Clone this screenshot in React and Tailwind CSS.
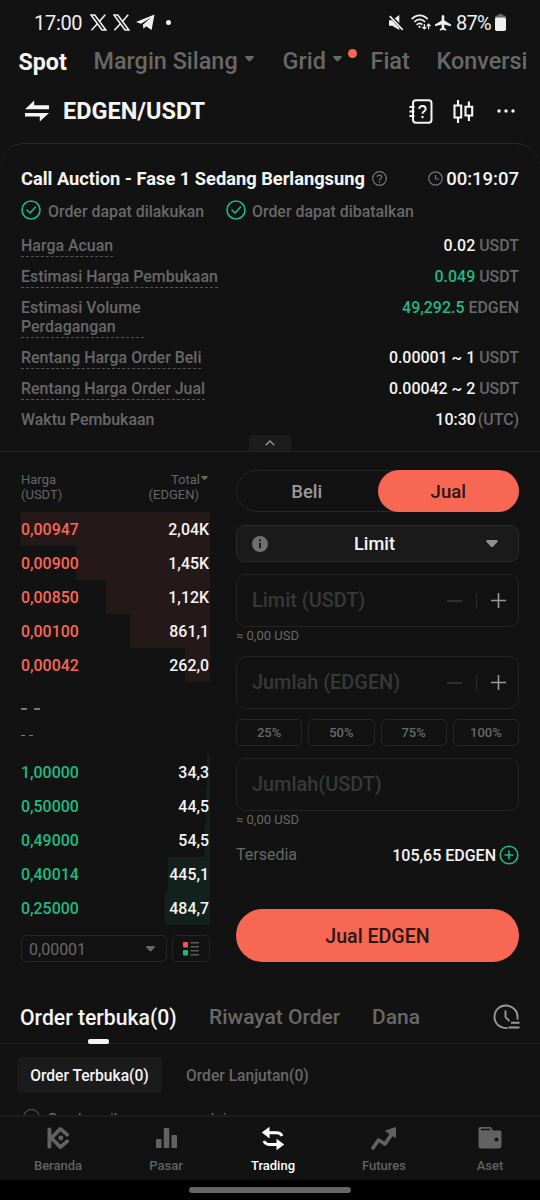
import { useState } from "react";

const auctionRows = [
  { label: "Harga Acuan", value: "0.02", unit: "USDT" },
  { label: "Estimasi Harga Pembukaan", value: "0.049", unit: "USDT", green: true },
  { label: "Estimasi Volume Perdagangan", value: "49,292.5", unit: "EDGEN", green: true, wrap: true },
  { label: "Rentang Harga Order Beli", value: "0.00001 ~ 1", unit: "USDT" },
  { label: "Rentang Harga Order Jual", value: "0.00042 ~ 2", unit: "USDT" },
];

const asks = [
  { price: "0,00947", total: "2,04K", depth: 189 },
  { price: "0,00900", total: "1,45K", depth: 134 },
  { price: "0,00850", total: "1,12K", depth: 104 },
  { price: "0,00100", total: "861,1", depth: 80 },
  { price: "0,00042", total: "262,0", depth: 25 },
];

const bids = [
  { price: "1,00000", total: "34,3", depth: 3 },
  { price: "0,50000", total: "44,5", depth: 4 },
  { price: "0,49000", total: "54,5", depth: 5 },
  { price: "0,40014", total: "445,1", depth: 42 },
  { price: "0,25000", total: "484,7", depth: 45 },
];

const XLogo = () => (
  <svg width="17" height="17" viewBox="0 0 17 17" fill="none" stroke="#f0f0f0">
    <path d="M1 1h3.8l11 15H12z" strokeWidth="1.6" />
    <path d="M15.2 .8 9.6 7.2M7.4 9.8 1.4 16.3" strokeWidth="1.6" />
  </svg>
);

const Caret = ({ className, size = 10 }) => (
  <svg className={className} width={size} height={size * 0.6} viewBox="0 0 10 6" fill="currentColor">
    <path d="M1.2 0h7.6c1 0 1.4.9.8 1.6L6 5.5c-.6.6-1.4.6-2 0L.4 1.6C-.2.9.2 0 1.2 0z" />
  </svg>
);

const CheckCircle = () => (
  <svg width="20" height="20" viewBox="0 0 20 20" fill="none" stroke="#1fba83" strokeWidth="1.6">
    <circle cx="10" cy="10" r="9" />
    <path d="m6 10 3 3 5.3-5.8" strokeLinecap="round" strokeLinejoin="round" />
  </svg>
);

function StatusBar() {
  return (
    <div className="flex h-[45px] items-center pl-[34px] pr-[34px] text-[20px] text-[#f0f0f0]">
      <span className="w-[48px] whitespace-nowrap tracking-[-0.3px]">17:00</span>
      <div className="ml-[8px] flex items-center gap-[6px]">
        <XLogo />
        <XLogo />
        <svg width="19" height="17" viewBox="0 0 19 17" fill="#f0f0f0">
          <path d="M18.5.4 15.6 16 10 12.2l-2.5 2.5-.7-4L15 3.5 5 9.7 0 8z" />
        </svg>
      </div>
      <span className="ml-[11px] size-[5px] rounded-full bg-[#f0f0f0]" />
      <div className="ml-auto flex items-center">
        <svg width="15" height="16" viewBox="0 0 16 17" fill="#f0f0f0">
          <path d="M0 5.5h3.5L11 0v16L3.5 11.5H0z" />
          <path d="M.5 0 15 15.5" stroke="#121212" strokeWidth="3.6" />
          <path d="M.8 1.2 14.6 15.8" stroke="#f0f0f0" strokeWidth="1.8" />
        </svg>
        <svg className="ml-[7px]" width="20" height="17" viewBox="0 0 21 17" fill="none" stroke="#f0f0f0" strokeWidth="1.8">
          <path d="M.7 5C5.5-.3 12.7-.3 17.500 5M3.500 8c3.200-3.600 8-3.600 11.200 0M6 11c1.800-1.900 4-1.900 5.800-.3" />
          <circle cx="9" cy="13" r="1.2" fill="#f0f0f0" stroke="none" />
          <path d="M14 10v5m-2-1.800 2 2 2-2M18.500 15.500v-5m-2 1.800 2-2 2 2" strokeWidth="1.3" />
        </svg>
        <svg className="ml-[4px]" width="16" height="16" viewBox="0 0 17 17" fill="#f0f0f0">
          <path d="M8.5 0c.9 0 1.4.8 1.4 1.7v4.200L17 10v2l-7.100-2v3.800l2 1.400v1.500l-3.400-1-3.400 1v-1.500l2-1.400V10L0 12v-2l7.100-4.100V1.700C7.100.8 7.600 0 8.500 0z" />
        </svg>
        <span className="ml-[5px] w-[37px] whitespace-nowrap tracking-[-0.8px]">87%</span>
        <svg className="ml-[2px]" width="11" height="17" viewBox="0 0 11 17">
          <rect x="3" y="0" width="5" height="3" rx="1" fill="#666" />
          <rect x="0" y="1.5" width="11" height="5" rx="1.5" fill="#666" />
          <rect x="0" y="3.5" width="11" height="13.5" rx="1.8" fill="#f0f0f0" />
        </svg>
      </div>
    </div>
  );
}

function MarketTabs() {
  return (
    <div className="flex h-[32px] items-center overflow-hidden whitespace-nowrap pt-[2px] text-[23.4px] font-medium text-[#686868]">
      <span className="ml-[18.500px] w-[75px] text-[23.2px] font-bold text-[#f5f5f5]">Spot</span>
      <span className="w-[151px]">Margin Silang</span>
      <Caret className="mb-[6px] mr-[29px]" size={9} />
      <span className="w-[50px]">Grid</span>
      <Caret className="mb-[6px]" size={9} />
      <span className="mb-[17px] ml-[6px] size-[9px] rounded-full bg-[#f86754]" />
      <span className="ml-[14px] w-[66px]">Fiat</span>
      <span>Konversi</span>
    </div>
  );
}

function PairHeader() {
  return (
    <div className="flex h-[66px] items-center pl-[24px] pr-[25px] pt-[2px]">
      <svg width="26" height="22" viewBox="0 0 26 22" fill="#f5f5f5">
        <path d="M1 9.3 10.2.5v4.800H25v4H1zM25 12.900 15.800 21.500v-5H1v-3.600h24z" />
      </svg>
      <span className="ml-[13px] whitespace-nowrap pt-[2px] text-[23.5px] font-bold text-[#f5f5f5]">EDGEN/USDT</span>
      <div className="ml-auto flex items-center text-[#f5f5f5]">
        <svg width="24" height="25" viewBox="0 0 24 25" fill="none" stroke="currentColor" strokeWidth="2">
          <rect x="4" y="1.2" width="18.5" height="22.5" rx="3" />
          <path d="M.5 8h5M.5 12.5h5M.5 17h5" />
          <path d="M10.200 10c0-4 6.500-3.900 6.500 0 0 2.300-3.200 2.300-3.200 4.800" strokeWidth="1.9" />
          <circle cx="13.5" cy="18" r="1.2" fill="currentColor" stroke="none" />
        </svg>
        <svg className="ml-[20px]" width="21" height="23" viewBox="0 0 21 23" fill="none" stroke="currentColor" strokeWidth="2.1">
          <path d="M1.500 5.500h6.700v12H1.500zM12.500 6.800h6.700v8.700h-6.700zM5 0v5.500M5 17.500V23M15.900 1.600v5M15.900 15.500v5.500" />
        </svg>
        <svg className="ml-[23px]" width="18" height="4" viewBox="0 0 18 4" fill="currentColor">
          <circle cx="2" cy="2" r="1.7" />
          <circle cx="9" cy="2" r="1.7" />
          <circle cx="16" cy="2" r="1.7" />
        </svg>
      </div>
    </div>
  );
}

function AuctionCard() {
  return (
    <div className="flex h-[308px] flex-col rounded-t-[24px] border-t border-[#2a2a2a] px-[21px] pt-[22px]">
      <div className="flex h-[24px] items-center">
        <span className="whitespace-nowrap pt-px text-[18.25px] font-bold text-[#f5f5f5]">
          Call Auction - Fase 1 Sedang Berlangsung
        </span>
        <svg className="ml-[7px]" width="15" height="15" viewBox="0 0 15 15" fill="none" stroke="#777">
          <circle cx="7.5" cy="7.5" r="6.8" strokeWidth="1.2" />
          <path d="M5.300 6.100c0-2.800 4.400-2.700 4.400-.1 0 1.500-2.200 1.600-2.200 3.200" strokeWidth="1.2" />
          <circle cx="7.5" cy="11" r=".8" fill="#777" stroke="none" />
        </svg>
        <svg className="ml-auto" width="15" height="15" viewBox="0 0 15 15" fill="none" stroke="#777" strokeWidth="1.2">
          <circle cx="7.5" cy="7.5" r="6.7" />
          <path d="M7.500 3.800v4.200h3.600" />
        </svg>
        <span className="ml-[3px] pt-[3px] text-[18.5px] font-medium text-[#f5f5f5]">00:19:07</span>
      </div>

      <div className="mt-[10px] flex h-[20px] items-center whitespace-nowrap text-[15.9px] text-[#686868]">
        <CheckCircle />
        <span className="ml-[7px] w-[178px] pt-[3px] font-medium">Order dapat dilakukan</span>
        <CheckCircle />
        <span className="ml-[6px] pt-[3px] font-medium">Order dapat dibatalkan</span>
      </div>

      <div className="mt-[16px] flex flex-col gap-[10px] text-[15.95px] font-medium leading-[19px] text-[#686868]">
        {auctionRows.map((row) => (
          <div key={row.label} className="flex items-start justify-between">
            <span
              className={
                row.wrap
                  ? "w-[123px] border-b border-dashed border-[#555] pb-px"
                  : "border-b border-dashed border-[#555] pb-px"
              }
            >
              {row.label}
            </span>
            <span>
              <span className={row.green ? "text-[#1fba83]" : "text-[#f5f5f5]"}>{row.value}</span> {row.unit}
            </span>
          </div>
        ))}
        <div className="flex justify-between">
          <span>Waktu Pembukaan</span>
          <span>
            <span className="mr-[2px] text-[#f5f5f5]">10:30</span>(UTC)
          </span>
        </div>
      </div>

      <div className="mx-auto mt-auto flex h-[16px] w-[42px] shrink-0 items-center justify-center rounded-t-[4px] bg-[#1c1c1c]">
        <svg width="10" height="6" viewBox="0 0 10 6" fill="none" stroke="#999" strokeWidth="1.3">
          <path d="m.7 5.200 4.300-4.200 4.300 4.200" />
        </svg>
      </div>
    </div>
  );
}

function BookRow({ row, side }) {
  return (
    <div className="relative flex h-[34px] items-center justify-between pr-px pt-[2px] text-[15.9px] font-medium">
      <div
        className={side === "ask" ? "absolute inset-y-0 right-0 bg-[#251818]" : "absolute inset-y-0 right-0 bg-[#12211c]"}
        style={{ width: row.depth }}
      />
      <span className={side === "ask" ? "relative text-[#f86754]" : "relative text-[#1fba83]"}>{row.price}</span>
      <span className="relative text-[#f5f5f5]">{row.total}</span>
    </div>
  );
}

function OrderBook() {
  return (
    <div className="w-[189px] pt-[20px]">
      <div className="flex h-[40px] justify-between text-[13px] leading-[15px] text-[#656565]">
        <span>
          Harga
          <br />
          (USDT)
        </span>
        <div className="text-right">
          <div className="flex items-center justify-end pr-[2px]">
            Total
            <Caret className="mb-[3px] ml-[1px]" size={7} />
          </div>
          <div className="pr-[11px]">(EDGEN)</div>
        </div>
      </div>
      {asks.map((row) => (
        <BookRow key={row.price} row={row} side="ask" />
      ))}
      <div className="flex h-[73px] flex-col gap-[25px] pt-[26px]">
        <div className="flex gap-[7px]">
          <span className="h-[2px] w-[6px] bg-[#777]" />
          <span className="h-[2px] w-[6px] bg-[#777]" />
        </div>
        <div className="flex gap-[4px]">
          <span className="h-px w-[4px] bg-[#777]" />
          <span className="h-px w-[4px] bg-[#777]" />
        </div>
      </div>
      {bids.map((row) => (
        <BookRow key={row.price} row={row} side="bid" />
      ))}
      <div className="mt-[10px] flex h-[27px] gap-[5px]">
        <div className="flex w-[146px] items-center justify-between rounded-[5px] border border-[#272727] pl-[7px] pr-[11px] pt-[2px] text-[16px] text-[#686868]">
          0,00001
          <Caret className="mb-px" size={9} />
        </div>
        <div className="flex flex-1 items-center justify-center rounded-[5px] border border-[#272727]">
          <svg width="16" height="14" viewBox="0 0 16 14">
            <rect width="5" height="5.5" rx="1" fill="#f65454" />
            <rect y="8" width="5" height="5.5" rx="1" fill="#1fba83" />
            <path d="M7.500 .8H16M7.500 4.800H16M7.500 8.800H16M7.500 12.800H16" stroke="#5a5a5a" strokeWidth="1.4" />
          </svg>
        </div>
      </div>
    </div>
  );
}

function AmountInput({ placeholder, stepper }) {
  return (
    <div className="flex h-[53px] items-center justify-between rounded-[10px] border border-[#242424] pl-[15px] pr-[12px] text-[19.9px] font-medium text-[#383838]">
      {placeholder}
      {stepper && (
        <div className="flex items-center gap-[14px]">
          <span className="h-[2px] w-[15px] bg-[#303030]" />
          <span className="h-[16px] w-px bg-[#2b2b2b]" />
          <svg width="15" height="15" viewBox="0 0 15 15" stroke="#999" strokeWidth="1.6">
            <path d="M0 7.500h15M7.500 0v15" />
          </svg>
        </div>
      )}
    </div>
  );
}

function OrderForm() {
  const [side, setSide] = useState("sell");
  const active = "flex-1 rounded-full bg-[#f86754] pt-[3px] text-[#2b1613]";
  const inactive = "flex-1 pt-[3px]";

  return (
    <div className="w-[283px] pt-[18px]">
      <div className="flex h-[42px] rounded-full text-[18.5px] font-medium text-[#999] ring-1 ring-inset ring-[#262626]">
        <button className={side === "buy" ? active : inactive} onClick={() => setSide("buy")}>
          Beli
        </button>
        <button className={side === "sell" ? active : inactive} onClick={() => setSide("sell")}>
          Jual
        </button>
      </div>

      <div className="mt-[13px] flex h-[37px] items-center rounded-[9px] border border-[#2b2b2b] bg-[#1a1a1a] pl-[15px] pr-[20px]">
        <svg width="16" height="16" viewBox="0 0 16 16">
          <circle cx="8" cy="8" r="8" fill="#707070" />
          <path d="M8 3.200v2M8 6.800v5.500" stroke="#1a1a1a" strokeWidth="1.9" />
        </svg>
        <span className="flex-1 pr-[5px] pt-px text-center text-[18.2px] font-medium text-[#f5f5f5]">Limit</span>
        <Caret className="text-[#8f8f8f]" size={12} />
      </div>

      <div className="mt-[12px]">
        <AmountInput placeholder="Limit (USDT)" stepper />
      </div>
      <div className="h-[29px] text-[13px] leading-[17px] text-[#686868]">≈ 0,00 USD</div>
      <AmountInput placeholder="Jumlah (EDGEN)" stepper />
      <div className="mt-[10px] grid h-[27px] grid-cols-4 gap-[6px] text-[13px] font-medium text-[#686868]">
        {["25%", "50%", "75%", "100%"].map((pct) => (
          <button key={pct} className="rounded-[5px] border border-[#272727]">
            {pct}
          </button>
        ))}
      </div>
      <div className="mt-[12px]">
        <AmountInput placeholder="Jumlah(USDT)" />
      </div>
      <div className="h-[33px] text-[13px] leading-[17px] text-[#686868]">≈ 0,00 USD</div>

      <div className="flex h-[22px] items-center justify-between text-[16px] text-[#686868]">
        Tersedia
        <div className="flex items-center gap-[3px] font-medium text-[#f5f5f5]">
          <span className="pt-[2px]">105,65 EDGEN</span>
          <svg width="20" height="20" viewBox="0 0 20 20" fill="none" stroke="#1fba83" strokeWidth="1.6">
            <circle cx="10" cy="10" r="8.8" />
            <path d="M5.500 10h9M10 5.500v9" />
          </svg>
        </div>
      </div>
      <button className="mt-[43px] h-[53px] w-full rounded-full bg-[#f86754] pt-[3px] text-[19.6px] font-medium text-[#2b1613]">
        Jual EDGEN
      </button>
    </div>
  );
}

function OrdersSection() {
  return (
    <div className="flex h-[123px] flex-col overflow-hidden whitespace-nowrap">
      <div className="flex h-[52px] shrink-0 items-center border-b border-[#202020] pl-[20px] pr-[20px] text-[21px] font-medium text-[#686868]">
        <div className="relative flex h-full w-[189px] items-center text-[21.2px] text-[#f5f5f5]">
          Order terbuka(0)
          <span className="absolute -bottom-px left-[68px] h-[5px] w-[21px] rounded-[2px] bg-[#f5f5f5]" />
        </div>
        <span className="w-[163px]">Riwayat Order</span>
        <span>Dana</span>
        <svg className="mb-[2px] ml-auto" width="27" height="26" viewBox="0 0 27 26" fill="none" stroke="#999" strokeWidth="1.9">
          <path d="M14.500 24C8 25 1.500 20 1.500 13S6.500 1.500 13 1.500 24.500 7 24.500 12.500v3M12.500 6.500v6.700l4 4M18 18.800h8.500M15.500 23.500h11" />
        </svg>
      </div>
      <div className="ml-[17px] mt-[13px] flex h-[36px] shrink-0 items-center text-[15.6px] font-medium">
        <span className="flex h-full w-[145px] items-center justify-center rounded-[5px] bg-[#1b1b1b] pt-[3px] text-[#f5f5f5]">
          Order Terbuka(0)
        </span>
        <span className="ml-[24px] pt-[3px] text-[#686868]">Order Lanjutan(0)</span>
      </div>
      <div className="ml-[23px] mt-[16px] flex shrink-0 items-start text-[15px] leading-[18px] text-[#777]">
        <span className="size-[17px] rounded-full border border-[#666]" />
        <span className="ml-[8px] pt-px">Sembunyikan pasangan lainnya</span>
      </div>
    </div>
  );
}

function NavItem({ label, width, active, children }) {
  return (
    <div
      className={active ? "flex flex-col items-center text-white" : "flex flex-col items-center text-[#626262]"}
      style={{ width }}
    >
      <div className="flex h-[26px] items-center">{children}</div>
      <span className="mt-[6px] text-[13px] font-medium leading-[18px]">{label}</span>
    </div>
  );
}

function BottomNav() {
  return (
    <div className="flex h-[65px] border-t-2 border-[#1c1c1c] pl-[4px] pt-[8px]">
      <NavItem label="Beranda" width={108}>
        <svg width="23" height="24" viewBox="0 0 24 24" fill="none" stroke="currentColor" strokeWidth="4" strokeLinecap="round" strokeLinejoin="round">
          <path d="M2.500 3v18M4.500 12 14 2.500l7 6M4.500 12l9.500 9.500 7-6" />
          <circle cx="14.500" cy="12" r="2.6" fill="currentColor" stroke="none" />
        </svg>
      </NavItem>
      <NavItem label="Pasar" width={108}>
        <svg width="21" height="20" viewBox="0 0 21 20" fill="currentColor">
          <rect x="0" y="11" width="5.5" height="9" rx=".8" />
          <rect x="7.8" y="0" width="5.5" height="20" rx=".8" />
          <rect x="15.5" y="7" width="5.5" height="13" rx=".8" />
        </svg>
      </NavItem>
      <NavItem label="Trading" width={106} active>
        <svg width="24" height="25" viewBox="0 0 24 25" fill="none" stroke="currentColor" strokeWidth="3">
          <path d="M7 6.800h8.500c3 0 4.500 1 5.500 3.200M17 18.500H9c-3.200 0-5-1-6-3.500" />
          <path d="M8.500.8v11.600L.8 6.600zM15.500 12.800v11.400l7.700-5.700z" fill="currentColor" stroke="none" />
        </svg>
      </NavItem>
      <NavItem label="Futures" width={116}>
        <svg width="26" height="23" viewBox="0 0 26 23" fill="none" stroke="currentColor" strokeWidth="3.7">
          <path d="m2 21 5.500-8 6.500 4 6.500-9.500" strokeLinecap="round" strokeLinejoin="round" />
          <path d="M24.500.5v10L14.500 4z" fill="currentColor" stroke="currentColor" strokeWidth="1" strokeLinejoin="round" />
        </svg>
      </NavItem>
      <NavItem label="Aset" width={96}>
        <svg width="24" height="22" viewBox="0 0 24 22" fill="currentColor">
          <path d="M2 0h11l2 3.500h6.500c1.200 0 2 .8 2 2V19c0 1.500-1 2.500-2.500 2.500H3C1.500 21.500.5 20.500.5 19V2c0-1 .5-2 1.500-2z" />
          <path d="M3 2.500h9.500" stroke="#121212" strokeWidth="1.5" />
          <circle cx="18.5" cy="12.5" r="2" fill="#121212" />
        </svg>
      </NavItem>
    </div>
  );
}

export default function App() {
  return (
    <div className="flex h-[1200px] w-[540px] flex-col overflow-hidden bg-[#121212] font-['Roboto',sans-serif]">
      <StatusBar />
      <MarketTabs />
      <PairHeader />
      <AuctionCard />
      <div className="flex h-[541px] justify-between border-t border-[#242424] px-[21px]">
        <OrderBook />
        <OrderForm />
      </div>
      <OrdersSection />
      <BottomNav />
      <div className="flex h-[20px] items-center justify-center bg-black">
        <div className="h-[6px] w-[162px] rounded-full bg-[#656565]" />
      </div>
    </div>
  );
}
